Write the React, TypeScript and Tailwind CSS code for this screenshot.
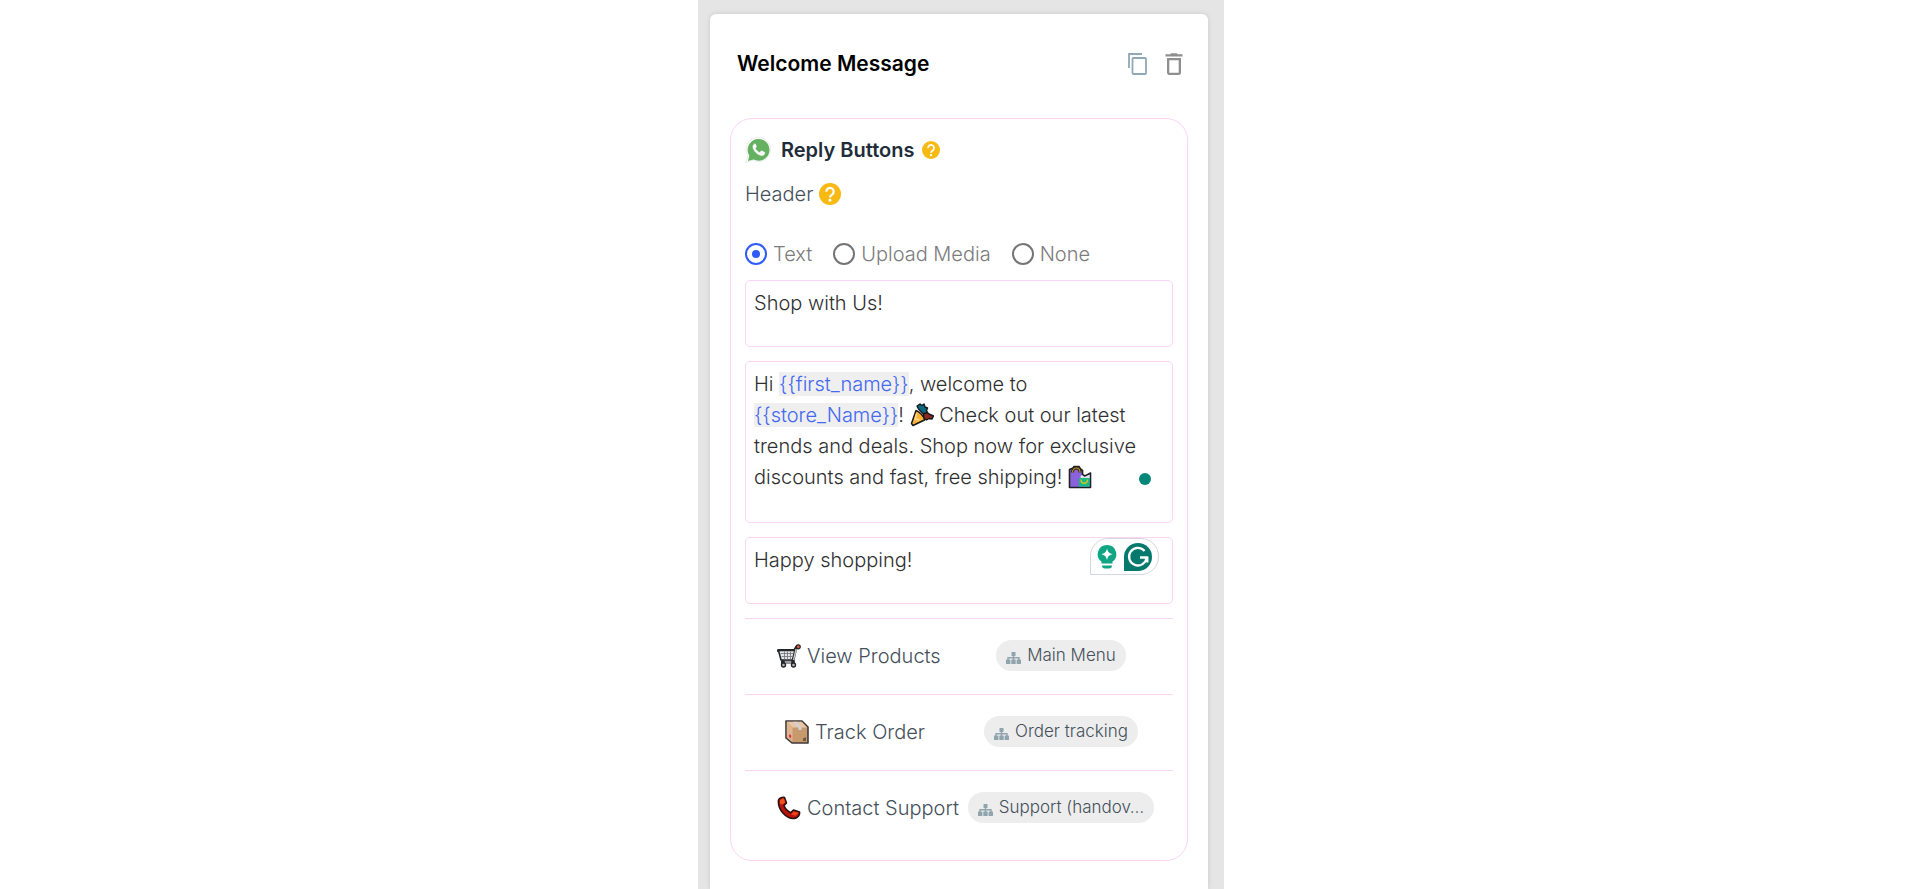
import { useState } from "react";
import type { ReactNode } from "react";

const HEADER_TYPES = ["Text", "Upload Media", "None"];

interface IconProps {
  className?: string;
}

function CopyIcon({ className }: IconProps) {
  return (
    <svg viewBox="0 0 24 24" className={className} fill="none" stroke="#8fa9b5" strokeWidth="1.8">
      <path d="M3 16V2h13" />
      <rect x="6.5" y="6" width="13.5" height="16" rx="1" />
    </svg>
  );
}

function TrashIcon({ className }: IconProps) {
  return (
    <svg viewBox="0 0 24 24" className={className} fill="#8f8f8f">
      <path
        fillRule="evenodd"
        d="M5 20.5C5 21.9 5.900 23 7.200 23h9.600c1.300 0 2.200-1.100 2.200-2.500V6H5zM7.300 8.300h9.400v12.400H7.300zM15.800 2.300 14.700 1.200H9.300L8.200 2.300H3.500v2.300h17V2.300z"
      />
    </svg>
  );
}

function WhatsAppIcon({ className }: IconProps) {
  return (
    <svg viewBox="0 0 26 28" className={className}>
      <path
        d="M13.5 1.500a12 12 0 1 1-5.400 22.700L.8 26.500l2-6.900A12 12 0 0 1 13.500 1.500z"
        fill="#fff"
        stroke="#ececec"
        strokeWidth="1"
      />
      <path d="M13.500 3a10.900 10.900 0 1 1-4.900 20.600L3 25.100l1.300-5.500A10.900 10.900 0 0 1 13.500 3z" fill="#64b161" />
      <path
        d="M9.300 8.200c-.9.500-1.500 1.500-1.300 2.900.5 3.700 4 7.400 8 8.300 1.900.4 3.400-.5 3.800-2.200.1-.5 0-.8-.5-1l-2.300-1.200c-.4-.2-.7-.1-1 .2l-.9 1.100c-.2.200-.5.300-.8.100-1.700-.8-3-2-3.900-3.700-.1-.3-.1-.5.100-.8l.7-.9c.2-.3.200-.6.100-.9l-1-2.100c-.2-.3-.7-.1-1 .2z"
        fill="#fff"
        stroke="#fff"
        strokeWidth=".6"
      />
    </svg>
  );
}

function HelpIcon({ className }: IconProps) {
  return (
    <svg viewBox="0 0 24 24" className={className}>
      <circle cx="12" cy="12" r="12" fill="#f8b913" />
      <path
        d="M8 9.500a4 4 0 1 1 6.300 3.100c-1.500 1-2.300 1.700-2.300 3.100"
        fill="none"
        stroke="#fff"
        strokeWidth="2.400"
      />
      <circle cx="12" cy="18.800" r="1.600" fill="#fff" />
    </svg>
  );
}

function SitemapIcon({ className }: IconProps) {
  return (
    <svg viewBox="0 0 15 12" className={className} fill="#90a4ae">
      <rect x="5.500" y="0" width="4" height="4" rx=".5" />
      <rect x="0" y="7.500" width="4.400" height="4.500" rx=".5" />
      <rect x="5.300" y="7.500" width="4.400" height="4.500" rx=".5" />
      <rect x="10.600" y="7.500" width="4.400" height="4.500" rx=".5" />
      <path d="M2 8V5.800h11V8M7.500 4v4" fill="none" stroke="#90a4ae" strokeWidth="1.400" />
    </svg>
  );
}

function PopperIcon({ className }: IconProps) {
  return (
    <svg viewBox="0 0 24 24" className={className} stroke="#15181c" strokeLinejoin="round">
      <path d="M8.500 6 7 3l3-2 2 1.500L14 1l1 3 2.500 1-1 2.500 1.500 3-4 1z" fill="#0b6a80" strokeWidth="1.400" />
      <path d="m13.500 11 3.500-1.500 2 1.500 4.500 2-1.500 3-3-.5-2.500 1.500-3-2z" fill="#8a2a20" strokeWidth="1.400" />
      <path d="M6 7.500 1.500 20.500l1.500 2L14.500 17C14 13.500 9.500 8.500 6 7.500z" fill="#fbb63a" strokeWidth="1.500" />
      <path d="M6.500 10.500 5 16l4.500 1" fill="none" stroke="#fcd98a" strokeWidth="1.400" />
    </svg>
  );
}

function BagsIcon({ className }: IconProps) {
  return (
    <svg viewBox="0 0 24 24" className={className}>
      <path
        d="M1.500 4.500 5 3l1-1.500h5L12.500 4l2 1.500v4L17 11l5.500-3v14.500h-21z"
        fill="#8a63dc"
        stroke="#202124"
        strokeWidth="1.600"
        strokeLinejoin="round"
      />
      <path d="m12.500 11 1.500-1 2.500 2 5.200-2.500V13.500h-9z" fill="#e2e4ea" />
      <path d="M11 13h10.700v8.700H11z" fill="#18b984" />
      <path d="M13 14.500c0 5 6.500 5 6.500 0" fill="none" stroke="#d4c227" strokeWidth="1.400" />
      <path d="M4.500 7.500C4.500 1.500 12 1.500 12 7.500" fill="none" stroke="#2a2420" strokeWidth="3" />
      <path d="M4.500 7.500C4.500 1.500 12 1.500 12 7.500" fill="none" stroke="#c79318" strokeWidth="1.200" />
    </svg>
  );
}

function CartIcon({ className }: IconProps) {
  return (
    <svg viewBox="0 0 24 24" className={className} fill="none" strokeLinejoin="round" strokeLinecap="round">
      <path d="M1.500 6.500h16l2.500-4M18 7l-2.500 11H5.500" stroke="#25282b" strokeWidth="3.200" />
      <path d="M1.500 6.500h16.300L15.500 16H4z" fill="#e4e5e6" stroke="#25282b" strokeWidth="1.600" />
      <path d="M4 9.500h12M5 12.500h10.500M7.500 8v7M10.500 8v7M13.500 8v7" stroke="#777b80" strokeWidth=".9" />
      <path d="M6 18h10l3-12.500" stroke="#c2c4c7" strokeWidth="1.400" />
      <path d="M6 17.500v3M16 17.500v3" stroke="#25282b" strokeWidth="3.600" />
      <circle cx="6.500" cy="21" r="2" fill="#b5b7ba" stroke="#25282b" strokeWidth="1.400" />
      <circle cx="16.500" cy="21" r="2" fill="#b5b7ba" stroke="#25282b" strokeWidth="1.400" />
      <circle cx="21.300" cy="2.800" r="2" fill="#e8543f" stroke="#25282b" strokeWidth="1.200" />
    </svg>
  );
}

function BoxIcon({ className }: IconProps) {
  return (
    <svg viewBox="0 0 24 24" className={className}>
      <path d="M1 1h16l6 6v16H7l-6-5z" fill="#c69a6d" stroke="#3f3a38" strokeWidth="1.600" strokeLinejoin="round" />
      <path d="M1.800 1.800H16.700L22 7.500H7.500z" fill="#e9c6a8" />
      <path d="M1.800 1.800 7.500 7.500V22l-5.700-4.500z" fill="#dfb591" />
      <path d="m8.500 1.800 5 5.700V10h3V7.500l-5-5.700z" fill="#cfd2d6" />
      <path d="m4.800 14 1.700 2-1.200 2.500L3.800 16z" fill="#e8284a" />
      <path d="M18 21v-2.500l3-1.500v4z" fill="#6f5a3f" />
    </svg>
  );
}

function PhoneIcon({ className }: IconProps) {
  return (
    <svg viewBox="0 0 24 24" className={className}>
      <path
        d="M1.500 4C2.500 2 5.500.8 7.500 1.500L9.500 7 7 9.500c1 3 3.500 5.500 6.500 7.300l3-2.800 6 2c.6 3-2 6.200-5 6.500C9 23.200.5 13.500 1.500 4z"
        fill="#b9140c"
        stroke="#2a1210"
        strokeWidth="1.600"
        strokeLinejoin="round"
      />
      <path d="M3 4.500C4 3 5.500 2.300 7 2.600l1.200 4-3.200 2-2-1z" fill="#f4511e" />
      <path d="m14 18.500 2.700-3 5 1.300-3 3z" fill="#f4421e" />
    </svg>
  );
}

function BulbIcon({ className }: IconProps) {
  return (
    <svg viewBox="0 0 20 24" className={className} fill="#11a683">
      <path d="M10 0a9.200 9.200 0 0 0-5.500 16.600V18.500h11v-1.900A9.200 9.200 0 0 0 10 0z" />
      <path d="M5 20.500h10a3 3 0 0 1-3 3H8a3 3 0 0 1-3-3z" />
      <path d="M10 3.500c.9 3.600 2.100 4.800 5.700 5.700-3.600.9-4.800 2.100-5.700 5.700-.9-3.600-2.100-4.800-5.700-5.700 3.600-.9 4.800-2.100 5.700-5.700z" fill="#fff" />
    </svg>
  );
}

function GrammarlyIcon({ className }: IconProps) {
  return (
    <svg viewBox="0 0 28 28" className={className}>
      <path d="M14 0a14 14 0 1 1 0 28H0V14A14 14 0 0 1 14 0z" fill="#057a6c" />
      <path d="M20.600 8A8.800 8.800 0 1 0 22.600 14.500" fill="none" stroke="#fff" strokeWidth="2.300" />
      <path d="M16 14.500h7.500M23.300 13.500v6" fill="none" stroke="#fff" strokeWidth="2.300" />
    </svg>
  );
}

interface ReplyButton {
  label: string;
  icon: ReactNode;
  target: string;
  indent: string;
}

const REPLY_BUTTONS: ReplyButton[] = [
  { label: "View Products", icon: <CartIcon className="size-6" />, target: "Main Menu", indent: "pl-8" },
  { label: "Track Order", icon: <BoxIcon className="size-6" />, target: "Order tracking", indent: "pl-10" },
  { label: "Contact Support", icon: <PhoneIcon className="size-6" />, target: "Support (handov…", indent: "pl-8" },
];

function Variable({ children }: { children: ReactNode }) {
  return <span className="bg-[#efefef] text-[#4468f2]">{children}</span>;
}

export default function App() {
  const [headerType, setHeaderType] = useState("Text");
  const [header, setHeader] = useState("Shop with Us!");
  const [footer, setFooter] = useState("Happy shopping!");

  return (
    <div className="min-h-screen bg-white pl-0.5 font-['Inter','Liberation_Sans',sans-serif] text-xl font-light text-[#45505b]">
      <main className="mx-auto w-full max-w-[526px] bg-[#e5e5e5] pt-3.5 pr-4 pl-3">
        <section className="min-h-[875px] rounded-t-md bg-white px-5 shadow-[0_0_5px_rgba(0,0,0,0.12)]">
          {/* Card title and actions */}
          <div className="flex h-[104px] items-start justify-between pt-[34px] pr-0.5 pl-[7px]">
            <h1 className="text-[21px] leading-8 font-semibold text-black">Welcome Message</h1>
            <div className="flex items-center gap-3 pt-1">
              <button type="button" aria-label="Duplicate" className="cursor-pointer">
                <CopyIcon className="size-6" />
              </button>
              <button type="button" aria-label="Delete" className="cursor-pointer">
                <TrashIcon className="size-6" />
              </button>
            </div>
          </div>

          <div className="rounded-[22px] border border-[#fbd5f5] px-3.5 pt-[15px] pb-3.5">
            <div className="flex h-8 items-center">
              <WhatsAppIcon className="h-7 w-[26px]" />
              <h2 className="ml-2.5 font-semibold text-[#1f2d3a]">Reply Buttons</h2>
              <HelpIcon className="ml-2 size-[18px]" />
            </div>
            <div className="mt-3 flex h-8 items-center">
              <span>Header</span>
              <HelpIcon className="ml-1.5 size-[22px]" />
            </div>

            {/* Header type */}
            <div className="mt-7 flex h-8 items-center gap-[21px] text-[#7c7c7c]">
              {HEADER_TYPES.map((type) => (
                <label key={type} className="flex cursor-pointer items-center gap-1.5">
                  <input
                    type="radio"
                    name="header-type"
                    value={type}
                    checked={headerType === type}
                    onChange={() => setHeaderType(type)}
                    className="grid size-[22px] appearance-none place-content-center rounded-full border-2 border-[#757575] before:size-2 before:rounded-full checked:border-[#2f5bf6] checked:before:bg-[#2f5bf6]"
                  />
                  {type}
                </label>
              ))}
            </div>

            <textarea
              aria-label="Header text"
              value={header}
              onChange={(e) => setHeader(e.target.value)}
              className="mt-2.5 block h-[67px] w-full resize-none rounded-[5px] border border-[#fbd5f5] px-2 pt-[7px] leading-[31px] text-[#303030] outline-none"
            />

            {/* Message body */}
            <div className="relative mt-3.5">
              <div
                role="textbox"
                aria-label="Message body"
                aria-multiline="true"
                contentEditable
                suppressContentEditableWarning
                spellCheck={false}
                className="min-h-[162px] rounded-[5px] border border-[#fbd5f5] px-2 pt-[7px] leading-[31px] text-[#303030] outline-none"
              >
                Hi <Variable>{"{{first_name}}"}</Variable>, welcome to
                <br />
                <Variable>{"{{store_Name}}"}</Variable>! <PopperIcon className="inline size-6 align-[-5px]" /> Check out
                our latest
                <br />
                trends and deals. Shop now for exclusive
                <br />
                discounts and fast, free shipping! <BagsIcon className="inline size-6 align-[-5px]" />
              </div>
              <span className="absolute right-[22px] bottom-[38px] size-3 rounded-full bg-[#04877a]" />
            </div>

            <div className="relative mt-3.5">
              <textarea
                aria-label="Footer text"
                value={footer}
                onChange={(e) => setFooter(e.target.value)}
                className="block h-[67px] w-full resize-none rounded-[5px] border border-[#fbd5f5] px-2 pt-[7px] leading-[31px] text-[#303030] outline-none"
              />
              <div className="absolute top-px right-3.5 flex h-[37px] w-[69px] items-center justify-between rounded-[18px] rounded-bl-none border border-[#d5d7e3] bg-white px-1.5">
                <BulbIcon className="h-6 w-5" />
                <GrammarlyIcon className="size-7" />
              </div>
            </div>

            {/* Reply buttons with the flow each one leads to */}
            <ul className="mt-3.5">
              {REPLY_BUTTONS.map((button) => (
                <li key={button.label} className="flex h-[76px] border-t border-[#fbd5f5]">
                  <div className={`flex w-[204px] shrink-0 items-center gap-1.5 pb-0.5 whitespace-nowrap ${button.indent}`}>
                    <span className="shrink-0">{button.icon}</span>
                    {button.label}
                  </div>
                  <div className="flex flex-1 justify-center pt-[21px]">
                    <button
                      type="button"
                      className="flex h-[31px] cursor-pointer items-center gap-1.5 rounded-full bg-[#ededed] px-2.5 text-[17px] whitespace-nowrap"
                    >
                      <SitemapIcon className="mt-1 h-3 w-[15px] shrink-0" />
                      {button.target}
                    </button>
                  </div>
                </li>
              ))}
            </ul>
          </div>
        </section>
      </main>
    </div>
  );
}
